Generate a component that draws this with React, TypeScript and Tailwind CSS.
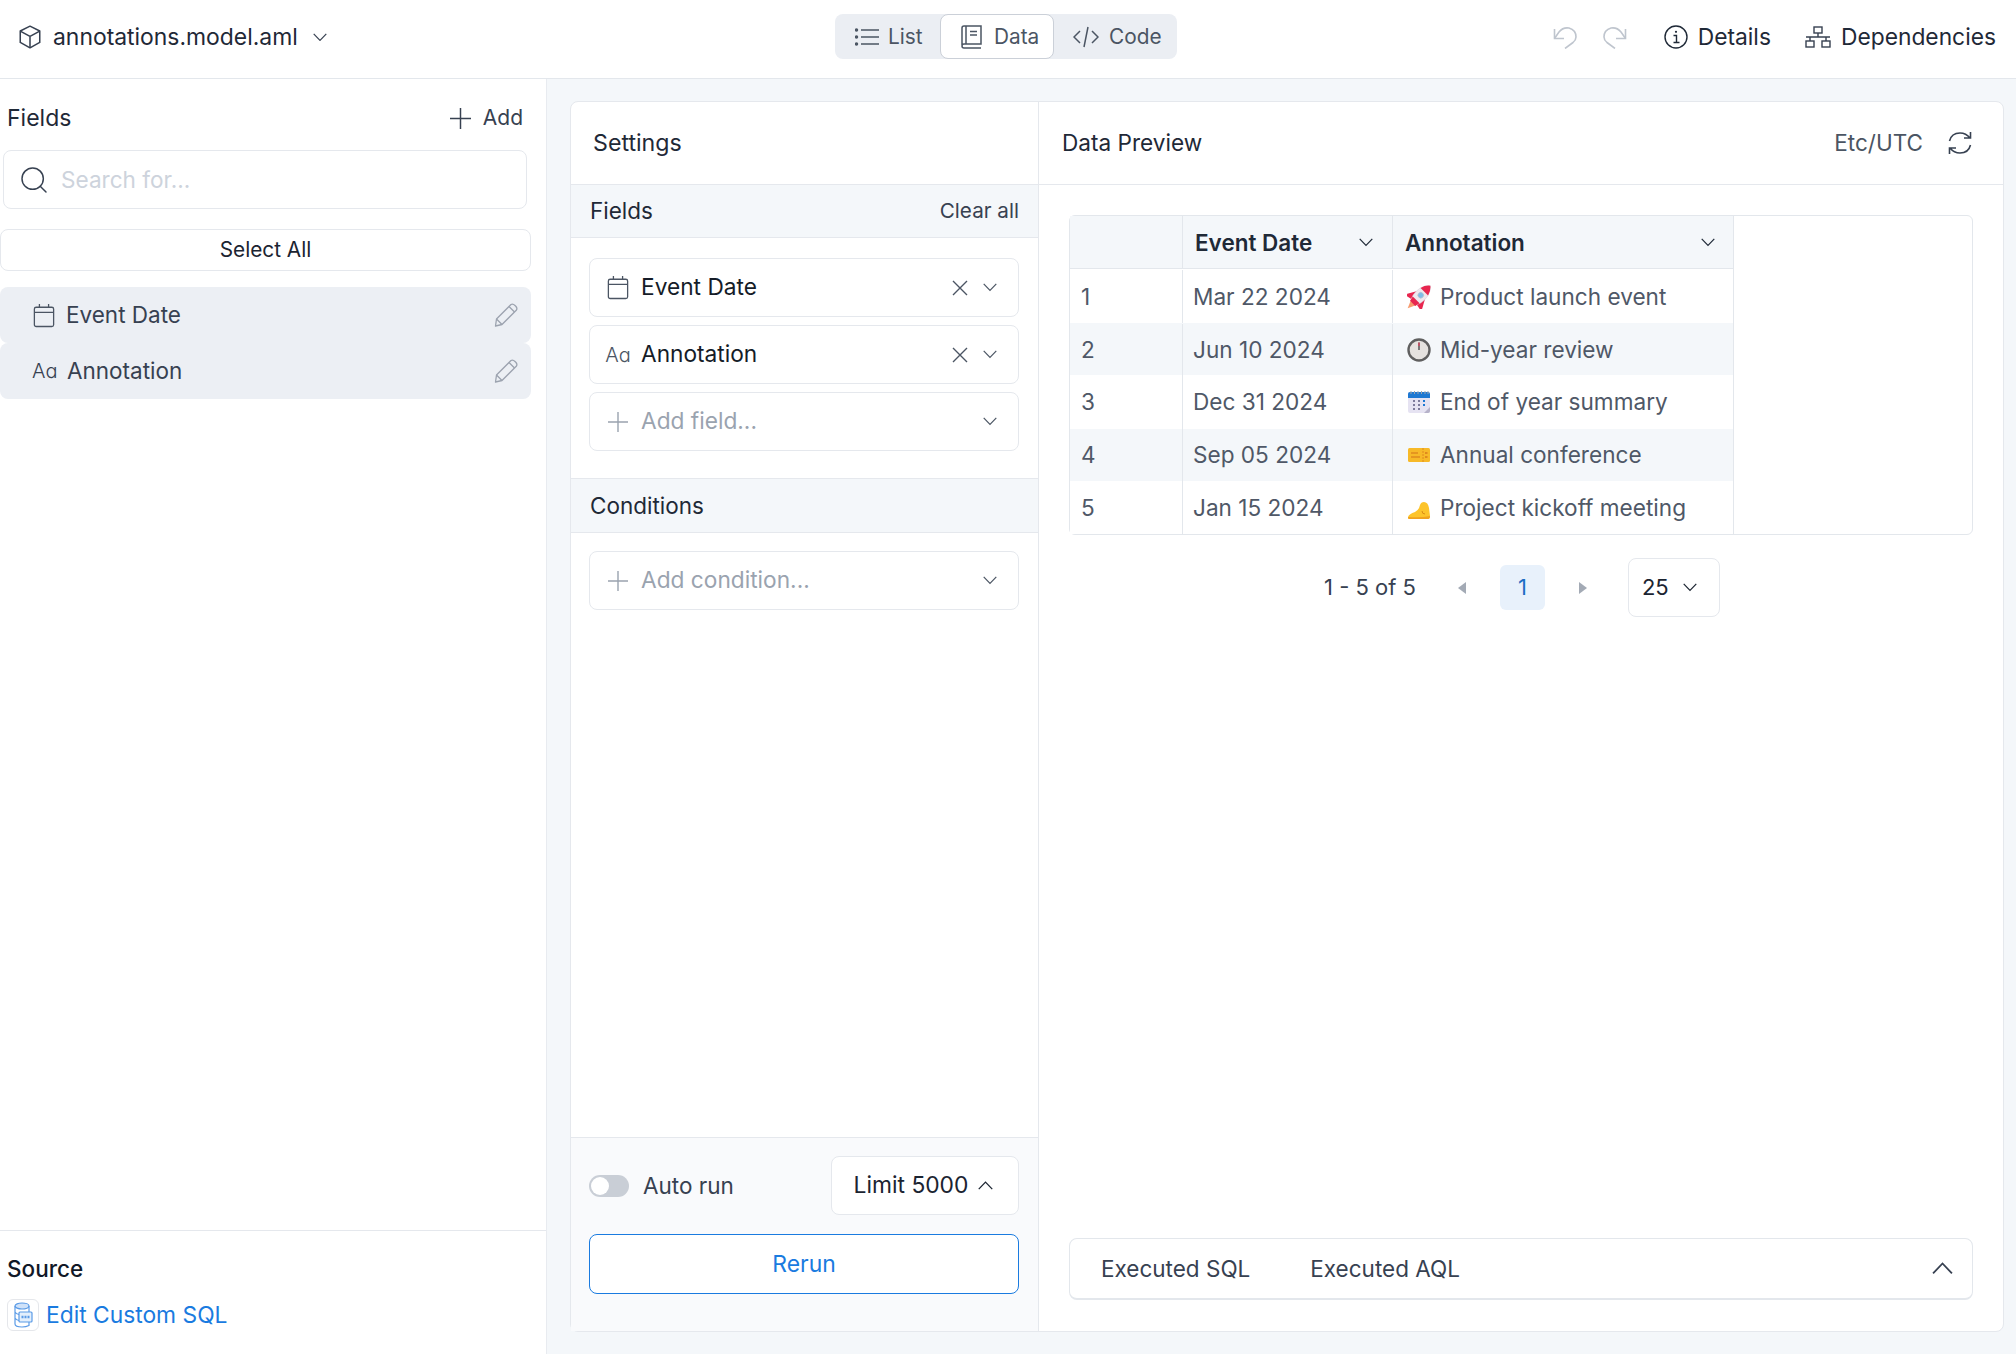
import React from "react";
import { Search } from "lucide-react";

// small line icons drawn to match the screenshot
const Chevron = ({ up, w = 14, className = "" }: { up?: boolean; w?: number; className?: string }) => (
  <svg width={w} height={w * 0.6} viewBox="0 0 14 8.4" fill="none" stroke="currentColor" strokeWidth="1.2" className={`shrink-0 ${up ? "rotate-180" : ""} ${className}`}>
    <path d="M0.7 0.8 L7 7.4 L13.3 0.8" />
  </svg>
);

const PlusIcon = ({ size = 20, className = "" }: { size?: number; className?: string }) => (
  <svg width={size} height={size} viewBox="0 0 20 20" fill="none" stroke="currentColor" strokeWidth="1.4" className={`shrink-0 ${className}`}>
    <path d="M10 0 V20 M0 10 H20" />
  </svg>
);

const XIcon = () => (
  <svg width="16" height="16" viewBox="0 0 16 16" fill="none" stroke="#4b5563" strokeWidth="1.4" className="shrink-0">
    <path d="M1 1 L15 15 M15 1 L1 15" />
  </svg>
);

const CubeIcon = () => (
  <svg width="26" height="26" viewBox="0 0 24 24" fill="none" stroke="#374151" strokeWidth="1.4" strokeLinejoin="round">
    <path d="M12 2 L21 6.5 V17 L12 22 L3 17 V6.5 Z" />
    <path d="M3 6.5 L12 11.5 L21 6.5 M12 11.5 V22" />
  </svg>
);

const CalendarIcon = () => (
  <svg width="22" height="25" viewBox="0 0 24 26" fill="none" stroke="#4b5563" strokeWidth="1.4" className="shrink-0">
    <rect x="1.5" y="4" width="21" height="21" rx="2" />
    <path d="M1.5 9.5 H22.5 M7 0.5 V4 M17 0.5 V4" />
  </svg>
);

const PencilIcon = () => (
  <svg width="24" height="24" viewBox="0 0 24 24" fill="none" stroke="#9ca3af" strokeWidth="1.3" strokeLinejoin="round">
    <path d="M1.5 23 L2.5 16 L17 1.5 Q19 0.5 21 2.5 L22 3.5 Q23.5 5.5 22.5 7 L8 21.5 Z" />
    <path d="M15 3.5 L20.5 9 M2.5 16 L8 21.5" />
  </svg>
);

const ListIcon = () => (
  <svg width="24" height="20" viewBox="0 0 24 20" fill="none" stroke="#4b5563" strokeWidth="1.5">
    <path d="M6 3 H24 M6 10 H24 M6 17 H24" />
    <circle cx="1.5" cy="3" r="1" fill="#4b5563" />
    <circle cx="1.5" cy="10" r="1" fill="#4b5563" />
    <circle cx="1.5" cy="17" r="1" fill="#4b5563" />
  </svg>
);

const BookIcon = () => (
  <svg width="21" height="24" viewBox="0 0 21 24" fill="none" stroke="#4b5563" strokeWidth="1.5">
    <path d="M1 20 V3 Q1 1 3 1 H20 V19 H3 Q1 19 1 21 Q1 23 3 23 H20" />
    <path d="M5 1 V19 M9 6.5 H16 M9 10 H16" />
  </svg>
);

const CodeIcon = () => (
  <svg width="26" height="22" viewBox="0 0 26 22" fill="none" stroke="#4b5563" strokeWidth="1.5">
    <path d="M7 5 L1 11 L7 17 M19 5 L25 11 L19 17 M15 1 L11 21" />
  </svg>
);

const UndoIcon = ({ flip }: { flip?: boolean }) => (
  <svg width="24" height="24" viewBox="0 0 24 24" fill="none" stroke="#bfc5ce" strokeWidth="1.6" className={flip ? "-scale-x-100" : ""}>
    <path d="M1.5 4 V13.5 H11" />
    <path d="M1.5 13.5 L6 7 Q10 2 16 3 Q23 5 23 12 Q23 15 20 17.5 L12 23.5" />
  </svg>
);

const InfoIcon = () => (
  <svg width="24" height="24" viewBox="0 0 24 24" fill="none" stroke="#1f2937" strokeWidth="1.4">
    <circle cx="12" cy="12" r="11" />
    <path d="M9.5 10.5 H12.5 V17.5 M9.5 17.5 H15.5" />
    <circle cx="12" cy="6.8" r="1.1" fill="#1f2937" stroke="none" />
  </svg>
);

const NetworkIcon = () => (
  <svg width="26" height="22" viewBox="0 0 26 22" fill="none" stroke="#374151" strokeWidth="1.4">
    <rect x="9" y="1" width="8" height="6" />
    <rect x="1" y="15" width="8" height="6" />
    <rect x="17" y="15" width="8" height="6" />
    <path d="M13 7 V11 M1 11 H25 M5 11 V15 M21 11 V15" />
  </svg>
);

const RefreshIcon = () => (
  <svg width="24" height="24" viewBox="0 0 24 24" fill="none" stroke="#374151" strokeWidth="1.6">
    <path d="M1.5 10 Q3.5 2 12 2 Q18 2 22 7 M22.5 1 V7 H16" />
    <path d="M22.5 14 Q20.5 22 12 22 Q6 22 2 17 M1.5 23 V17 H8" />
  </svg>
);

const SqlIcon = () => (
  <div className="flex h-[32px] w-[32px] items-center justify-center rounded-md border border-[#e5e7eb]">
    <svg width="20" height="26" viewBox="0 0 20 26" fill="none" stroke="#5b9be6" strokeWidth="1.2">
      <ellipse cx="9" cy="4" rx="7" ry="3" fill="#cfe2f9" />
      <path d="M2 4 V22 Q2 25 9 25 Q13 25 16 23.5 V20 M2 10 Q3 12 6 12.5 M2 16 Q3 18 6 18.5 M16 4 V10" />
      <rect x="6" y="10" width="13" height="10" rx="1" fill="#e3effc" />
      <path d="M8.5 15 H16.5" strokeWidth="2.4" strokeDasharray="2 1" />
    </svg>
  </div>
);

// the colour emoji in the table, no emoji font here so they are small drawings
const RocketEmoji = () => (
  <svg width="24" height="24" viewBox="0 0 24 24">
    <g transform="rotate(45 12 12)">
      <path d="M8.5 20 H15.5 L12 28 Z" fill="#f79a6d" />
      <path d="M7 8 L1.5 18 Q1.5 20 3 20 L8 19 Z" fill="#e8264f" />
      <path d="M17 8 L22.5 18 Q22.5 20 21 20 L16 19 Z" fill="#e8264f" />
      <path d="M12 -4 Q18 1 18 10 Q18 15 16 19 H8 Q6 15 6 10 Q6 1 12 -4 Z" fill="#efe9ee" stroke="#d9d2da" strokeWidth="0.5" />
      <path d="M12 -4 Q16 -1 17.3 4.5 H6.7 Q8 -1 12 -4 Z" fill="#e8264f" />
      <path d="M7.2 16 H16.8 L15.6 21 H8.4 Z" fill="#e8264f" />
      <circle cx="12" cy="9.5" r="2.8" fill="#7fbde8" stroke="#b7c2cf" strokeWidth="0.8" />
    </g>
  </svg>
);

const ClockEmoji = () => (
  <svg width="24" height="24" viewBox="0 0 24 24">
    <circle cx="12" cy="12" r="10.5" fill="#e5e2df" stroke="#5f5f5f" strokeWidth="2.4" />
    <path d="M12 4.5 V12" stroke="#4b4b4b" strokeWidth="1.4" />
    <path d="M12 4.5 V8" stroke="#d9455f" strokeWidth="1.4" />
  </svg>
);

const CalendarEmoji = () => (
  <svg width="24" height="24" viewBox="0 0 24 24">
    <rect x="1" y="2" width="22" height="21" rx="2" fill="#e6e3f2" />
    <path d="M1 4 Q1 2 3 2 H21 Q23 2 23 4 V8 H1 Z" fill="#1e78d2" />
    <path d="M4 1 V4 M7.5 1 V4 M11 1 V4 M14.5 1 V4 M18 1 V4 M21 1 V4" stroke="#9ca3af" strokeWidth="1" />
    <path d="M23 17 V21 Q23 23 21 23 H17 Z" fill="#b6b2c9" />
    <g fill="#7e7b9c">
      <rect x="6" y="10" width="2" height="2" />
      <rect x="11" y="10" width="2" height="2" />
      <rect x="16" y="10" width="2" height="2" fill="#1e78d2" />
      <rect x="6" y="14" width="2" height="2" />
      <rect x="11" y="14" width="2" height="2" />
      <rect x="16" y="14" width="2" height="2" fill="#1e78d2" />
      <rect x="6" y="18" width="2" height="2" />
      <rect x="11" y="18" width="2" height="2" />
    </g>
  </svg>
);

const TicketEmoji = () => (
  <svg width="24" height="24" viewBox="0 0 24 24">
    <rect x="1" y="5" width="22" height="14" rx="1.5" fill="#f7b928" />
    <path d="M4 10 H11 M4 14 H13" stroke="#e08a1e" strokeWidth="1.4" />
    <path d="M16 5 V19" stroke="#e08a1e" strokeWidth="1" strokeDasharray="2 1" />
    <rect x="18" y="9" width="2.5" height="2" fill="#e08a1e" />
    <rect x="18" y="13" width="2.5" height="2" fill="#e08a1e" />
  </svg>
);

const KickEmoji = () => (
  <svg width="24" height="24" viewBox="0 0 24 24">
    <path d="M1 21 Q2 18 8 16 Q12 14 13 9 Q14 6 17 6 Q21 6 22 12 L23 20 Q23 23 21 23 H2 Q1 23 1 21 Z" fill="#fdc42a" />
    <path d="M1 21 Q1 23 2 23 H21 Q23 23 23 20 Q14 22 1 21 Z" fill="#f0a21e" />
    <path d="M15 15 Q15 18 18 18" stroke="#d98b14" strokeWidth="1" fill="none" />
  </svg>
);

const rows = [
  { id: 1, date: "Mar 22 2024", text: "Product launch event", icon: <RocketEmoji />, h: "h-[54px] pt-[1px]" },
  { id: 2, date: "Jun 10 2024", text: "Mid-year review", icon: <ClockEmoji />, h: "h-[52px] pt-[1px]" },
  { id: 3, date: "Dec 31 2024", text: "End of year summary", icon: <CalendarEmoji />, h: "h-[54px]" },
  { id: 4, date: "Sep 05 2024", text: "Annual conference", icon: <TicketEmoji />, h: "h-[52px]" },
  { id: 5, date: "Jan 15 2024", text: "Project kickoff meeting", icon: <KickEmoji />, h: "h-[53px]" },
];

const FieldBox = ({ icon, label, muted, clear }: { icon: React.ReactNode; label: string; muted?: boolean; clear?: boolean }) => (
  <div className="flex h-[59px] items-center rounded-lg border border-[#e5e8ed] bg-white pl-[16px] pr-[21px] text-[#4b5563]">
    <div className="flex w-[24px] justify-center">{icon}</div>
    <span className={`ml-[11px] flex-1 text-[22.7px] ${muted ? "text-[#9aa3af]" : "text-[#151c28]"}`}>{label}</span>
    {clear && (
      <div className="mr-[15px]">
        <XIcon />
      </div>
    )}
    <Chevron />
  </div>
);

export default function App() {
  return (
    <div className="flex h-[1354px] w-[2016px] flex-col overflow-hidden bg-[#f4f7fa] font-['Inter',sans-serif] text-[#1f2937]">
      {/* top bar */}
      <header className="grid h-[79px] shrink-0 grid-cols-[835px_342px_1fr] items-center border-b border-[#e3e7ec] bg-white pb-[4px]">
        <div className="flex items-center pl-[17px]">
          <CubeIcon />
          <span className="ml-[10px] text-[22.9px]">annotations.model.aml</span>
          <Chevron className="ml-[15px] text-[#374151]" />
        </div>
        <div className="-mt-[1px] flex h-[45px] items-center rounded-lg bg-[#ebeef3] text-[20.8px] text-[#4b5563]">
          <div className="flex w-[105px] items-center pl-[20px]">
            <ListIcon />
            <span className="ml-[9px]">List</span>
          </div>
          <div className="flex h-[45px] w-[114px] items-center rounded-lg border border-[#cbd0d8] bg-white pl-[20px]">
            <BookIcon />
            <span className="ml-[12px]">Data</span>
          </div>
          <div className="flex items-center pl-[19px]">
            <CodeIcon />
            <span className="ml-[10px]">Code</span>
          </div>
        </div>
        <div className="flex items-center justify-end pr-[20px] text-[22.8px]">
          <UndoIcon />
          <div className="ml-[26px]">
            <UndoIcon flip />
          </div>
          <div className="ml-[37px]">
            <InfoIcon />
          </div>
          <span className="ml-[10px]">Details</span>
          <div className="ml-[34px]">
            <NetworkIcon />
          </div>
          <span className="ml-[10px]">Dependencies</span>
        </div>
      </header>

      <div className="flex min-h-0 flex-1">
        {/* field list */}
        <aside className="flex w-[547px] shrink-0 flex-col border-r border-[#e8ebf0] bg-white">
          <div className="flex h-[71px] items-center justify-between pl-[7px] pr-[23px] pt-[7px]">
            <span className="text-[23px] text-[#1f2937]">Fields</span>
            <div className="flex items-center text-[21px] text-[#374151]">
              <PlusIcon size={21} />
              <span className="ml-[12px]">Add</span>
            </div>
          </div>
          <div className="ml-[3px] flex h-[59px] w-[524px] items-center rounded-lg border border-[#e5e8ed] pl-[14px]">
            <Search size={32} strokeWidth={1.1} className="text-[#374151]" />
            <span className="ml-[11px] text-[22.6px] text-[#cdd3dc]">Search for...</span>
          </div>
          <div className="mt-[20px] flex h-[42px] w-[531px] items-center justify-center rounded-lg border border-[#e5e8ed] text-[20.8px] text-[#1b2431]">
            Select All
          </div>
          <div className="mt-[16px] flex h-[56px] w-[531px] items-center rounded-lg bg-[#eceff4] pl-[33px] pr-[13px] text-[22.5px] text-[#374151]">
            <CalendarIcon />
            <span className="ml-[11px] flex-1">Event Date</span>
            <PencilIcon />
          </div>
          <div className="flex h-[56px] w-[531px] items-center rounded-lg bg-[#eceff4] pl-[32px] pr-[13px] text-[22.5px] text-[#374151]">
            <span className="w-[25px] text-[20px] font-light">Aɑ</span>
            <span className="ml-[10px] flex-1">Annotation</span>
            <PencilIcon />
          </div>
          <div className="mt-auto h-[124px] border-t border-[#e5e8ed] pl-[7px]">
            <div className="mt-[21px] text-[22.5px] font-medium text-[#111827]">Source</div>
            <div className="mt-[12px] flex items-center">
              <SqlIcon />
              <span className="ml-[7px] text-[22.8px] text-[#1a7be0]">Edit Custom SQL</span>
            </div>
          </div>
        </aside>

        {/* main card */}
        <main className="min-w-0 flex-1 pb-[22px] pl-[23px] pr-[12px] pt-[22px]">
          <div className="flex h-full rounded-lg border border-[#e5e8ed] bg-white">
            {/* settings */}
            <section className="flex w-[468px] shrink-0 flex-col border-r border-[#e5e8ed]">
              <div className="flex h-[83px] shrink-0 items-center border-b border-[#e5e8ed] pl-[22px] text-[23.2px] text-[#1f2937]">Settings</div>
              <div className="flex h-[53px] shrink-0 items-center justify-between border-b border-[#e5e8ed] bg-[#f4f7fa] pl-[19px] pr-[19px]">
                <span className="text-[22.5px]">Fields</span>
                <span className="text-[20.7px] text-[#374151]">Clear all</span>
              </div>
              <div className="flex h-[240px] shrink-0 flex-col gap-[8px] pl-[18px] pr-[19px] pt-[20px]">
                <FieldBox icon={<CalendarIcon />} label="Event Date" clear />
                <FieldBox icon={<span className="text-[20px] font-light text-[#4b5563]">Aɑ</span>} label="Annotation" clear />
                <FieldBox icon={<PlusIcon className="text-[#9aa3af]" />} label="Add field..." muted />
              </div>
              <div className="flex h-[55px] shrink-0 items-center border-y border-[#e5e8ed] bg-[#f4f7fa] pl-[19px] text-[22.5px]">Conditions</div>
              <div className="flex-1 pl-[18px] pr-[19px] pt-[18px]">
                <FieldBox icon={<PlusIcon className="text-[#9aa3af]" />} label="Add condition..." muted />
              </div>
              <div className="h-[194px] shrink-0 border-t border-[#e5e8ed] bg-[#f9fafc] pl-[18px] pr-[19px] pt-[18px]">
                <div className="flex items-center justify-between">
                  <div className="flex items-center">
                    <div className="flex h-[22px] w-[40px] items-center rounded-full bg-[#c9ced6] pl-[2px]">
                      <div className="h-[18px] w-[18px] rounded-full bg-white" />
                    </div>
                    <span className="ml-[14px] text-[22.5px] text-[#374151]">Auto run</span>
                  </div>
                  <div className="flex h-[59px] w-[188px] items-center justify-center rounded-lg border border-[#e5e8ed] bg-white pr-[3px] text-[22.8px] text-[#1b2431]">
                    Limit 5000
                    <Chevron up w={15} className="ml-[10px]" />
                  </div>
                </div>
                <div className="mt-[19px] flex h-[60px] items-center justify-center rounded-lg border border-[#1a7be0] bg-white text-[22.9px] text-[#1a7be0]">
                  Rerun
                </div>
              </div>
            </section>

            {/* preview */}
            <section className="flex min-w-0 flex-1 flex-col">
              <div className="flex h-[83px] shrink-0 items-center justify-between border-b border-[#e5e8ed] pl-[23px] pr-[31px]">
                <span className="text-[22.6px]">Data Preview</span>
                <div className="flex items-center">
                  <span className="text-[22.5px] text-[#4b5563]">Etc/UTC</span>
                  <div className="ml-[25px]">
                    <RefreshIcon />
                  </div>
                </div>
              </div>
              <div className="flex min-h-0 flex-1 flex-col px-[30px] pb-[31px] pt-[30px]">
                <div className="h-[320px] shrink-0 rounded-md border border-[#e3e7ec]">
                  <div className="w-[664px] border-r border-[#e3e7ec]">
                    <div className="flex h-[53px] items-center border-b border-[#e3e7ec] bg-[#f4f7fa] text-[22.5px] font-semibold text-[#1f2937]">
                      <div className="h-full w-[113px] border-r border-[#e3e7ec]" />
                      <div className="flex h-full w-[210px] items-center justify-between border-r border-[#e3e7ec] pl-[12px] pr-[19px] pt-[1px]">
                        Event Date
                        <Chevron />
                      </div>
                      <div className="flex h-full flex-1 items-center justify-between pl-[12px] pr-[18px] pt-[1px]">
                        Annotation
                        <Chevron />
                      </div>
                    </div>
                    {rows.map((r, i) => (
                      <div key={r.id} className={`flex ${r.h} items-center text-[22.6px] text-[#4f5867] ${i % 2 === 1 ? "bg-[#f4f7fa]" : "bg-white"}`}>
                        <div className="flex h-full w-[113px] items-center border-r border-[#e3e7ec] pl-[11px]">{r.id}</div>
                        <div className="flex h-full w-[210px] items-center border-r border-[#e3e7ec] pl-[10px]">{r.date}</div>
                        <div className="flex h-full flex-1 items-center pl-[14px]">
                          {r.icon}
                          <span className="ml-[9px]">{r.text}</span>
                        </div>
                      </div>
                    ))}
                  </div>
                </div>
                <div className="mt-[23px] flex items-center justify-center pl-[2px] text-[22px]">
                  <span className="text-[#374151]">1 - 5 of 5</span>
                  <svg width="10" height="14" viewBox="0 0 10 14" className="ml-[41px] fill-[#a3aab5]">
                    <path d="M9 1 V13 L1 7 Z" />
                  </svg>
                  <div className="ml-[33px] flex h-[45px] w-[45px] items-center justify-center rounded-md bg-[#e8f1fb] text-[#1d6fc4]">1</div>
                  <svg width="10" height="14" viewBox="0 0 10 14" className="ml-[33px] fill-[#a3aab5]">
                    <path d="M1 1 V13 L9 7 Z" />
                  </svg>
                  <div className="ml-[40px] flex h-[59px] w-[92px] items-center rounded-lg border border-[#e5e8ed] pl-[13px] text-[#1b2431]">
                    25
                    <Chevron className="ml-[14px]" />
                  </div>
                </div>
                <div className="mt-auto flex h-[62px] shrink-0 items-center rounded-lg border border-b-2 border-[#e3e7ec] bg-white pl-[31px] pr-[19px] text-[22.5px] text-[#374151]">
                  <span>Executed SQL</span>
                  <span className="ml-[60px]">Executed AQL</span>
                  <Chevron up w={21} className="ml-auto" />
                </div>
              </div>
            </section>
          </div>
        </main>
      </div>
    </div>
  );
}
